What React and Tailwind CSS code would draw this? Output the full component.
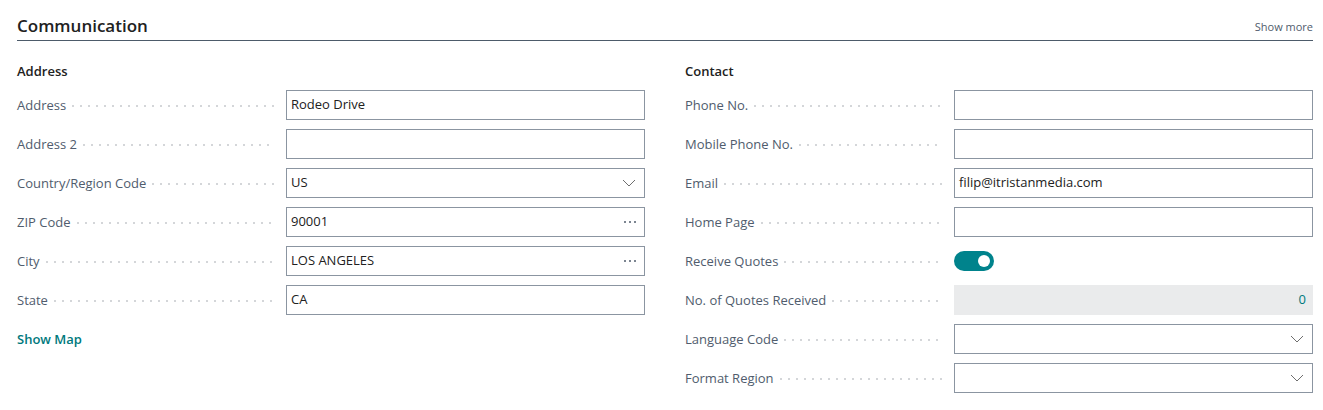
import React from "react";

const leftRows = [
  { label: "Address", value: "Rodeo Drive" },
  { label: "Address 2", value: "" },
  { label: "Country/Region Code", value: "US", kind: "select" },
  { label: "ZIP Code", value: "90001", kind: "lookup" },
  { label: "City", value: "LOS ANGELES", kind: "lookup" },
  { label: "State", value: "CA" },
];

const rightRows = [
  { label: "Phone No.", value: "" },
  { label: "Mobile Phone No.", value: "" },
  { label: "Email", value: "filip@itristanmedia.com" },
  { label: "Home Page", value: "" },
  { label: "Receive Quotes", kind: "toggle" },
  { label: "No. of Quotes Received", value: "0", kind: "readonly" },
  { label: "Language Code", value: "", kind: "select" },
  { label: "Format Region", value: "", kind: "select" },
];

function Chevron() {
  return (
    <svg width="14" height="8" viewBox="0 0 14 8" fill="none" className="shrink-0">
      <path d="M1 1l6 6 6-6" stroke="#6e6e6e" strokeWidth="1" />
    </svg>
  );
}

function Dots() {
  return (
    <span className="flex items-center gap-[3px] shrink-0">
      <span className="w-[2px] h-[2px] rounded-full bg-[#505c6d]" />
      <span className="w-[2px] h-[2px] rounded-full bg-[#505c6d]" />
      <span className="w-[2px] h-[2px] rounded-full bg-[#505c6d]" />
    </span>
  );
}

function Control({ row }) {
  if (row.kind === "toggle") {
    return (
      <div className="h-[30px] flex items-center">
        <div className="w-[40px] h-[20px] rounded-full bg-[#00838c] flex items-center justify-end pr-[4px]">
          <div className="w-[12px] h-[12px] rounded-full bg-white" />
        </div>
      </div>
    );
  }
  if (row.kind === "readonly") {
    return (
      <div className="h-[30px] bg-[#eaebec] flex items-center justify-end px-[7px] text-[13px] text-[#00797d]">
        {row.value}
      </div>
    );
  }
  return (
    <div className="h-[30px] border border-[#8b95a1] bg-white flex items-center justify-between pl-[4px] pr-[8px] text-[13px] text-[#212121]">
      <span>{row.value}</span>
      {row.kind === "select" && <Chevron />}
      {row.kind === "lookup" && <Dots />}
    </div>
  );
}

function Field({ row }) {
  return (
    <div className="grid grid-cols-[269px_1fr] items-center">
      <div className="flex items-center pr-[11px] min-w-0 pt-[2px]">
        <span className="text-[13px] text-[#505c6d] whitespace-nowrap">{row.label}</span>
        <span className="flex-1 ml-[6px] h-[2px] bg-[linear-gradient(to_right,#d4d6d9_2px,transparent_2px)] bg-[length:8px_2px] bg-repeat-x" />
      </div>
      <Control row={row} />
    </div>
  );
}

function Group({ title, rows, children }) {
  return (
    <div>
      <div className="h-[20px] flex items-center text-[13px] font-semibold text-[#212121] mb-[8px]">{title}</div>
      <div className="flex flex-col gap-[9px]">
        {rows.map((r) => (
          <Field key={r.label} row={r} />
        ))}
      </div>
      {children}
    </div>
  );
}

export default function App() {
  return (
    <div className="w-[1323px] h-[410px] bg-white pl-[17px] pr-[10px] pt-[15px] font-['Segoe_UI','Open_Sans',sans-serif]">
      <div className="flex items-center justify-between border-b border-[#4d5b6a] pb-[3px]">
        <h2 className="text-[17px] leading-[22px] font-semibold text-[#212121]">Communication</h2>
        <span className="text-[11px] text-[#505c6d] pt-[2px]">Show more</span>
      </div>
      <div className="grid grid-cols-2 gap-x-10 mt-[21px]">
        <Group title="Address" rows={leftRows}>
          <div className="mt-[15px] text-[13px] font-semibold text-[#00797d]">Show Map</div>
        </Group>
        <Group title="Contact" rows={rightRows} />
      </div>
    </div>
  );
}
